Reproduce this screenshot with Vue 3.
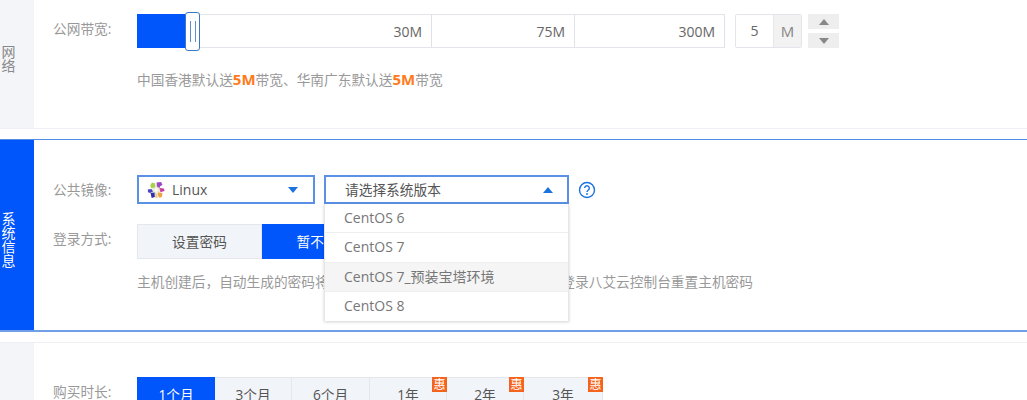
<script setup>
const marks = [
  { label: '30M', width: 295 },
  { label: '75M', width: 143 },
  { label: '300M', width: 150 }
]
const versions = ['CentOS 6', 'CentOS 7', 'CentOS 7_预装宝塔环境', 'CentOS 8']
const durations = [
  { label: '1个月', width: 78, active: true },
  { label: '3个月', width: 77 },
  { label: '6个月', width: 78 },
  { label: '1年', width: 77, promo: true },
  { label: '2年', width: 77, promo: true },
  { label: '3年', width: 79, promo: true }
]
</script>

<template>
  <div class="page">
    <section class="section sec-net">
      <div class="side side-net"><span>网络</span></div>
      <div class="main main-net">
        <div class="row">
          <div class="label">公网带宽:</div>
          <div class="slider">
            <div class="fill"></div>
            <div class="handle"><i></i><i></i></div>
            <div v-for="m in marks" :key="m.label" class="seg" :style="{ width: m.width + 'px' }">{{ m.label }}</div>
          </div>
          <div class="num">
            <span class="num-val">5</span>
            <span class="num-unit">M</span>
          </div>
          <div class="steps">
            <button class="step"><span class="tri up"></span></button>
            <button class="step"><span class="tri down"></span></button>
          </div>
        </div>
        <p class="hint hint-net">中国香港默认送<b>5M</b>带宽、华南广东默认送<b>5M</b>带宽</p>
      </div>
    </section>

    <section class="section sec-sys">
      <div class="side side-sys"><span>系统信息</span></div>
      <div class="main main-sys">
        <div class="row">
          <div class="label">公共镜像:</div>
          <div class="select select-os">
            <svg class="logo" width="18" height="18" viewBox="0 0 18 18">
              <circle cx="9" cy="9" r="5" fill="#e9ead0" />
              <path d="M5 1.5l3.4 1-.6 4-3.6.6-1-2.6z" fill="#a5d24e" />
              <path d="M9.5 1.5l4.6-.5 1.4 3-2.5 1.2-.5 1.8-2.5-1.6z" fill="#9a46c6" />
              <path d="M12.5 7l4.5.5.5 2.5-4 1.2z" fill="#c83fa4" />
              <path d="M11 11.5l4.5.5-.6 4-2.4.8-1.6-2.4z" fill="#f0a348" />
              <path d="M8 12.5l2.2.4.6 3.8-2.4.6z" fill="#f5cc86" />
              <path d="M3.5 12l4-.5.4 4.4-3.2 1.2z" fill="#2f2fb4" />
              <path d="M.8 8.4l3.6-.4 1.6 2.4-2.8 1.6-2.2-.8z" fill="#4a45c8" />
              <circle cx="9" cy="9" r="1.7" fill="#fff" />
            </svg>
            <span class="select-text">Linux</span>
            <span class="tri blue down"></span>
          </div>
          <div class="select select-ver">
            <span class="select-text">请选择系统版本</span>
            <span class="tri blue up"></span>
            <ul class="menu">
              <li v-for="(v, i) in versions" :key="v" :class="{ hover: i === 2 }">{{ v }}</li>
            </ul>
          </div>
          <svg class="help" width="18" height="18" viewBox="0 0 18 18">
            <circle cx="9" cy="9" r="7.5" fill="none" stroke="#1a73e0" stroke-width="1.4" />
            <path d="M6.7 7.1a2.3 2.3 0 1 1 3.6 1.9c-.9.6-1.3 1-1.3 2" fill="none" stroke="#1a73e0" stroke-width="1.4" />
            <circle cx="9" cy="13" r=".9" fill="#1a73e0" />
          </svg>
        </div>
        <div class="row row-login">
          <div class="label">登录方式:</div>
          <div class="tabs">
            <div class="tab tab-login">设置密码</div>
            <div class="tab tab-login active">暂不设置</div>
          </div>
        </div>
        <p class="hint hint-sys">主机创建后，自动生成的密码将通过站内信和邮件发送给您，您也可以登录八艾云控制台重置主机密码</p>
      </div>
    </section>

    <section class="section sec-buy">
      <div class="side side-net"></div>
      <div class="main main-buy">
        <div class="row">
          <div class="label">购买时长:</div>
          <div class="tabs">
            <div
              v-for="d in durations"
              :key="d.label"
              class="tab"
              :class="{ active: d.active }"
              :style="{ width: d.width + 'px' }"
            >
              {{ d.label }}
              <span v-if="d.promo" class="badge">惠</span>
            </div>
          </div>
        </div>
      </div>
    </section>
  </div>
</template>

<style scoped>
.page {
  width: 1027px;
  height: 400px;
  overflow: hidden;
  display: flex;
  flex-direction: column;
  gap: 10px;
  background: #fff;
  font-family: "Open Sans", "Noto Sans CJK SC", sans-serif;
  font-size: 13.7px;
  color: #666;
}
.section {
  display: flex;
  flex: none;
  box-sizing: border-box;
}
.sec-net {
  height: 129px;
  border-bottom: 1px solid #eef0f5;
}
.sec-sys {
  height: 193px;
  border-top: 1px solid #4e8ce6;
  border-bottom: 2px solid #6f9fe6;
}
.sec-buy {
  height: 120px;
  border-top: 1px solid #eceef2;
}
.side {
  width: 34px;
  flex: none;
  display: flex;
  align-items: center;
  box-sizing: border-box;
  padding-left: 1px;
}
.side span {
  width: 15px;
  font-size: 14px;
  line-height: 14px;
  text-align: center;
}
.side-net {
  background: #f3f5f9;
  color: #888;
  padding-bottom: 11px;
}
.side-sys {
  background: #0055fb;
  color: #fff;
  padding-top: 10px;
}
.main {
  flex: 1;
  padding-left: 19px;
}
.main-net { padding-top: 14px; }
.main-sys { padding-top: 35px; }
.main-buy { padding-top: 34px; }
.row {
  display: flex;
  align-items: flex-start;
}
.row-login { margin-top: 19px; }
.label {
  width: 84px;
  flex: none;
  line-height: 30px;
  color: #999;
}
.slider {
  position: relative;
  display: flex;
  height: 34px;
  box-sizing: border-box;
  border-top: 1px solid #e3e5ea;
  border-bottom: 1px solid #e3e5ea;
}
.seg {
  box-sizing: border-box;
  padding-right: 9px;
  border-right: 1px solid #dfe1e6;
  text-align: right;
  line-height: 34px;
  font-size: 14px;
  color: #666;
}
.fill {
  position: absolute;
  left: 0;
  top: -1px;
  bottom: -1px;
  width: 48px;
  background: #0055fb;
}
.handle {
  position: absolute;
  left: 48px;
  top: -3px;
  width: 15px;
  height: 39px;
  box-sizing: border-box;
  border: 1px solid #3a78c8;
  border-radius: 3px;
  background: #fff;
  display: flex;
  justify-content: center;
  align-items: center;
  gap: 4px;
}
.handle i {
  width: 1px;
  height: 21px;
  background: #5d90d0;
}
.num {
  display: flex;
  width: 67px;
  height: 34px;
  margin-left: 10px;
  box-sizing: border-box;
  border: 1px solid #e3e5ea;
  border-radius: 2px;
  line-height: 32px;
  text-align: center;
  font-size: 14px;
}
.num-val { width: 37px; }
.num-unit {
  flex: 1;
  background: #f2f2f2;
  color: #888;
  font-size: 15px;
  border-left: 1px solid #e8e8e8;
}
.steps {
  display: flex;
  flex-direction: column;
  justify-content: space-between;
  height: 34px;
  margin-left: 6px;
}
.step {
  width: 31px;
  height: 15px;
  padding: 0;
  border: 0;
  background: #eeeeee;
  display: flex;
  align-items: center;
  justify-content: center;
}
.tri {
  display: block;
  width: 0;
  height: 0;
  border-left: 5px solid transparent;
  border-right: 5px solid transparent;
}
.tri.up { border-bottom: 6px solid #888; }
.tri.down { border-top: 6px solid #888; }
.tri.blue.up { border-bottom-color: #1a73e0; }
.tri.blue.down { border-top-color: #1a73e0; }
.hint {
  margin: 0;
  margin-left: 84px;
  line-height: 20px;
  color: #999;
  white-space: nowrap;
}
.hint b {
  color: #ff7a1a;
  font-size: 15px;
  font-weight: 700;
}
.hint-net { margin-top: 21px; }
.hint-sys { margin-top: 13px; }
.select {
  position: relative;
  display: flex;
  align-items: center;
  height: 29px;
  box-sizing: border-box;
  border: 2px solid #5a90e6;
  background: #fff;
  font-size: 13.7px;
  color: #555;
}
.select-os {
  width: 178px;
  padding: 0 15px 0 8px;
  gap: 7px;
}
.select-ver {
  width: 245px;
  margin-left: 9px;
  padding: 0 14px 0 19px;
}
.select-text {
  flex: 1;
  line-height: 26px;
  font-size: 14px;
}
.select-ver .select-text { font-size: 13.7px; }
.logo { flex: none; }
.menu {
  position: absolute;
  z-index: 2;
  top: 100%;
  left: -2px;
  width: 245px;
  margin: 2px 0 0;
  padding: 0;
  list-style: none;
  background: #fff;
  border-left: 1px solid #e6e6e6;
  border-right: 1px solid #e6e6e6;
  box-sizing: border-box;
  box-shadow: 0 1px 3px rgba(0, 0, 0, 0.18);
  font-size: 14px;
  color: #777;
}
.menu li {
  height: 29.25px;
  line-height: 28.5px;
  box-sizing: border-box;
  padding-left: 19px;
  border-bottom: 1px solid #eeeeee;
}
.menu li:last-child { border-bottom: 0; }
.menu li.hover { background: #f5f5f5; }
.help {
  margin: 5.5px 0 0 9px;
  flex: none;
}
.tabs { display: flex; }
.tab {
  position: relative;
  height: 35px;
  box-sizing: border-box;
  background: #f1f4f8;
  border: 1px solid #e4e7ec;
  border-left: 0;
  line-height: 34px;
  text-align: center;
  font-size: 13.7px;
  color: #555;
}
.tab:first-child { border-left: 1px solid #e4e7ec; }
.tab.active {
  background: #0055fb;
  border-color: #0055fb;
  color: #fff;
}
.tab-login { width: 125px; }
.badge {
  position: absolute;
  top: -1px;
  right: -1px;
  width: 15px;
  height: 15px;
  background: #f5641e;
  color: #fff;
  font-size: 12px;
  line-height: 15px;
  text-align: center;
}
</style>
